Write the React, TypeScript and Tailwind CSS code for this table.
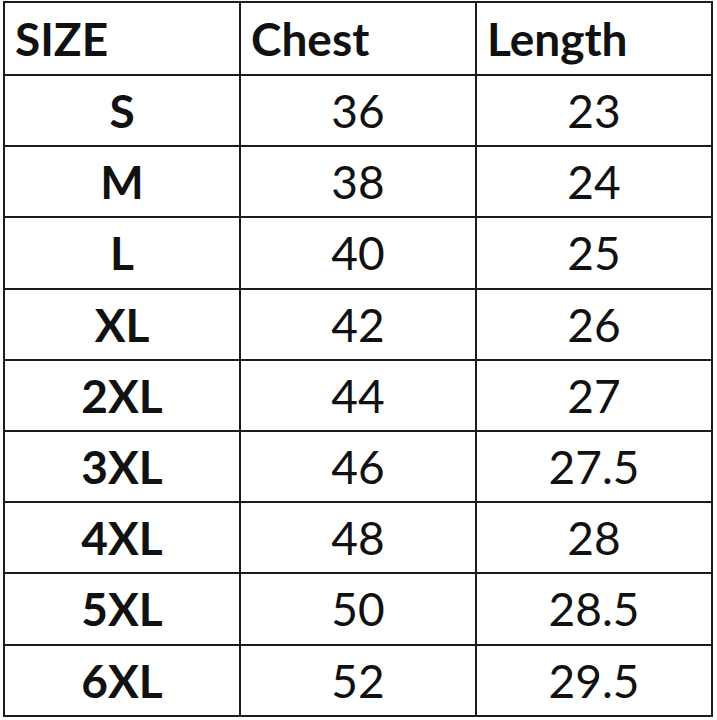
import React from 'react';

const rows = [
  ['S', '36', '23'],
  ['M', '38', '24'],
  ['L', '40', '25'],
  ['XL', '42', '26'],
  ['2XL', '44', '27'],
  ['3XL', '46', '27.5'],
  ['4XL', '48', '28'],
  ['5XL', '50', '28.5'],
  ['6XL', '52', '29.5'],
];

const App = () => {
  return (
    <div className="w-[717px] h-[720px] bg-white pl-[3px] pt-[1px] text-[#111]" style={{ fontFamily: 'Lato, "Open Sans", sans-serif' }}>
      <div className="grid w-[710px] grid-cols-[236px_236px_236px] grid-rows-[73px_repeat(9,71.2px)] border-l-2 border-t-2 border-[#1c1c1c]">
        <div className="flex items-center border-r-2 border-b-2 border-[#1c1c1c] pl-[10px] text-[46px] font-bold">SIZE</div>
        <div className="flex items-center border-r-2 border-b-2 border-[#1c1c1c] pl-[10px] text-[46px] font-bold">Chest</div>
        <div className="flex items-center border-r-2 border-b-2 border-[#1c1c1c] pl-[10px] text-[46px] font-bold">Length</div>
        {rows.map(([size, chest, length]) => (
          <React.Fragment key={size}>
            <div className="flex items-center justify-center border-r-2 border-b-2 border-[#1c1c1c] text-[46px] font-bold">{size}</div>
            <div className="flex items-center justify-center border-r-2 border-b-2 border-[#1c1c1c] text-[46px]">{chest}</div>
            <div className="flex items-center justify-center border-r-2 border-b-2 border-[#1c1c1c] text-[46px]">{length}</div>
          </React.Fragment>
        ))}
      </div>
    </div>
  );
};

export default App;
